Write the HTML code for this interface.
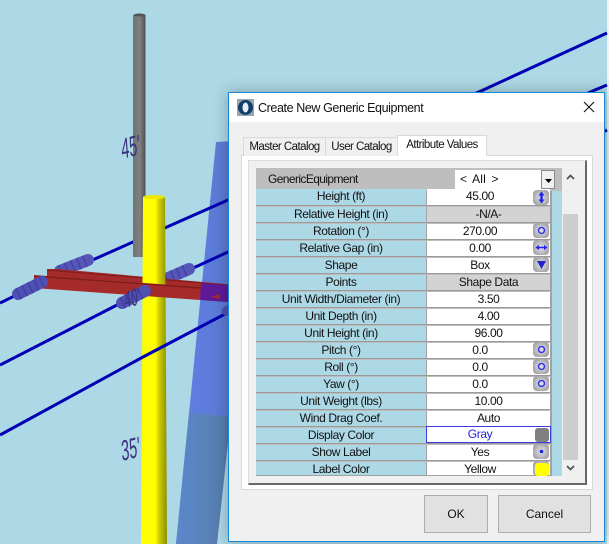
<!DOCTYPE html>
<html><head><meta charset="utf-8"><style>
html,body{margin:0;padding:0}
body{width:609px;height:544px;position:relative;overflow:hidden;background:#f0f0f0;font:12px "Liberation Sans",sans-serif;color:#111}
#scene{position:absolute;left:0;top:0}
div{position:absolute;box-sizing:border-box}
#dlg{left:228px;top:92px;width:377px;height:450px;background:#f0f0f0;border:1px solid #1a86d8;box-shadow:0 0 14px rgba(0,0,0,.28)}
#ttl{left:229px;top:93px;width:375px;height:29px;background:#fff}
.t{font-size:12px;line-height:14px;white-space:nowrap;letter-spacing:-.6px}
.tab{background:#f0f0f0;border:1px solid #d9d9d9;border-bottom:0;text-align:center;line-height:19px;font-size:11.5px;letter-spacing:-.55px;white-space:nowrap}
.l,.v{height:16px;line-height:14px;text-align:center;font-size:12px;letter-spacing:-.4px;white-space:nowrap}
.l{left:256px;width:170px;background:#add8e6}
.v{left:427px;width:123px;background:#fff}
.g{background:#d3d3d3}
.b{padding-right:17px}
.sep{left:256px;width:295px;height:2px;background:linear-gradient(#9a9a9a 50%,#bdbdbd 50%)}
.ic{left:533px;width:16px;height:15px;border-radius:4px;background:radial-gradient(circle at 50% 50%,#dcdce8 0,#c0c0c4 45%,#8f8f93 100%)}
.ic svg{display:block;margin-left:.5px}
.btn{background:#e1e1e1;border:1px solid #adadad;text-align:center;line-height:37px;font-size:12px}
</style></head><body>
<svg id="scene" width="609" height="544" viewBox="0 0 609 544">
<defs>
<linearGradient id="gp" x1="0" x2="1" y1="0" y2="0"><stop offset="0" stop-color="#727272"/><stop offset=".55" stop-color="#808080"/><stop offset="1" stop-color="#505050"/></linearGradient>
<linearGradient id="yp" x1="0" x2="1" y1="0" y2="0"><stop offset="0" stop-color="#ffff00"/><stop offset=".55" stop-color="#ffff00"/><stop offset=".72" stop-color="#c8c800"/><stop offset="1" stop-color="#8f8f00"/></linearGradient>
<linearGradient id="bt" x1="0" x2="1" y1="0" y2="0"><stop offset="0" stop-color="#5f7fe8"/><stop offset="1" stop-color="#5a78c8"/></linearGradient>
<linearGradient id="bb" x1="0" x2="1" y1="0" y2="0"><stop offset="0" stop-color="#5b88cc"/><stop offset="1" stop-color="#55779f"/></linearGradient>
</defs>
<rect width="607" height="544" fill="#add8e6"/>
<polygon points="216,142 250,140 250,544 176,544" fill="url(#bt)"/>
<polygon points="189,413 250,418 250,544 176,544" fill="url(#bb)"/>
<polygon points="217,544 228,443 250,443 250,544" fill="#add8e6"/>
<g fill="none" stroke="#0000b4" stroke-width="3">
<path d="M0 303L45 281L88 262L133 242L228 200L481 91L607 33"/>
<path d="M0 365L117 305L165 281L228 252L595 90L607 85"/>
</g>
<g fill="none">
<path d="M60 271L88 260" stroke="#5656b8" stroke-width="12" stroke-linecap="round"/>
<path d="M166 279L189 269" stroke="#5656b8" stroke-width="12" stroke-linecap="round"/>
<path d="M60 271L88 260M166 279L189 269" stroke="#4343a6" stroke-width="12" stroke-dasharray="1.5 5"/>
</g>
<polygon points="47,269 58,269 225,284 228,290 47,280" fill="#a52a2a"/>
<path d="M47 270L228 285" stroke="#7a1c1c" stroke-width="1"/>
<rect x="133" y="15" width="12.5" height="242" fill="url(#gp)"/>
<ellipse cx="139.5" cy="15" rx="6" ry="1.5" fill="#555"/>
<polygon points="143,197 165,197 167,544 141,544" fill="url(#yp)"/>
<ellipse cx="154" cy="197" rx="11" ry="2" fill="#e8e800"/>
<path d="M0 435L143 357L225 314L607 130" fill="none" stroke="#0000b4" stroke-width="3"/>
<text transform="translate(122,159) rotate(-4) skewY(-10) scale(.85,1.7)" font-size="17" fill="#3a3380" font-family="Liberation Sans">45'</text>
<text transform="translate(122,461) rotate(-4) skewY(-10) scale(.85,1.7)" font-size="17" fill="#3a3380" font-family="Liberation Sans">35'</text>
<polygon points="34,275 228,289 228,302 34,288" fill="#a52a2a"/>
<path d="M34 276L200 288L228 290" stroke="#7a1c1c" stroke-width="1.2"/>
<polygon points="201,283 228,285 228,302 200,300" fill="#5e1a96"/>
<polygon points="211,297 220,294 220,299" fill="#a52a2a"/>
<g fill="none">
<path d="M18 294L42 282M122 303L145 291" stroke="#5050b4" stroke-width="12" stroke-linecap="round"/>
<path d="M226 311L232 308" stroke="#5050b4" stroke-width="9" stroke-linecap="round"/>
<path d="M18 294L42 282M122 303L145 291" stroke="#3f3fa2" stroke-width="12" stroke-dasharray="1.5 5"/>
</g>
<text transform="translate(125,308) rotate(-4) skewY(-10) scale(.8,1.6)" font-size="15" fill="#3a3380" font-family="Liberation Sans">40'</text>
</svg>

<div id="dlg"></div>
<div id="ttl"></div>
<svg style="position:absolute;left:237px;top:99px" width="17" height="17" viewBox="0 0 17 17"><rect width="17" height="17" fill="#9aa6ae"/><circle cx="8.5" cy="8.5" r="7.5" fill="#123f6e"/><ellipse cx="8.5" cy="8.5" rx="3" ry="5" fill="#e8eef2"/></svg>
<div class="t" style="left:258px;top:101px;font-size:12.5px;line-height:15px;letter-spacing:-.4px">Create New Generic Equipment</div>
<svg style="position:absolute;left:583px;top:101px" width="12" height="12" viewBox="0 0 12 12"><path d="M1 1L11 11M11 1L1 11" stroke="#111" stroke-width="1.1"/></svg>

<div style="left:241px;top:155px;width:352px;height:335px;background:#fff;border:1px solid #d9d9d9"></div>
<div class="tab" style="left:243px;top:137px;width:83px;height:19px">Master Catalog</div>
<div class="tab" style="left:325px;top:137px;width:73px;height:19px">User Catalog</div>
<div class="tab" style="left:397px;top:135px;width:90px;height:21px;background:#fff">Attribute Values</div>
<div style="left:248px;top:160px;width:339px;height:325px;background:#f0f0f0;border:1px solid #dcdcdc;border-right:2px solid #696969;border-bottom:2px solid #696969"></div>

<div style="left:256px;top:168px;width:306px;height:308px;background:#add8e6"></div>
<div style="left:256px;top:168px;width:306px;height:23px;background:#bebebe"></div>
<div class="t" style="left:268px;top:172px">GenericEquipment</div>
<div style="left:455px;top:170px;width:100px;height:19px;background:#fff"></div>
<div class="t" style="left:460px;top:172px;letter-spacing:.2px;word-spacing:2px">&lt; All &gt;</div>
<div style="left:541px;top:170px;width:14px;height:19px;background:#f0f0f0;border:1px solid #8a8a8a"></div>
<svg style="position:absolute;left:545px;top:179px" width="7" height="4"><path d="M0 0H7L3.5 4Z" fill="#000"/></svg>

<div style="left:426px;top:191px;width:1px;height:285px;background:#a2a2a2"></div>
<div style="left:550px;top:191px;width:1.5px;height:285px;background:#a2a2a2"></div>

<div class="l" style="top:189px">Height (ft)</div><div class="v b" style="top:189px">45.00</div><div class="sep" style="top:205px"></div>
<div class="l" style="top:207px">Relative Height (in)</div><div class="v g" style="top:207px">-N/A-</div><div class="sep" style="top:222px"></div>
<div class="l" style="top:224px">Rotation (°)</div><div class="v b" style="top:224px">270.00</div><div class="sep" style="top:239px"></div>
<div class="l" style="top:241px">Relative Gap (in)</div><div class="v b" style="top:241px">0.00</div><div class="sep" style="top:256px"></div>
<div class="l" style="top:258px">Shape</div><div class="v b" style="top:258px">Box</div><div class="sep" style="top:273px"></div>
<div class="l" style="top:275px">Points</div><div class="v g" style="top:275px">Shape Data</div><div class="sep" style="top:290px"></div>
<div class="l" style="top:292px">Unit Width/Diameter (in)</div><div class="v" style="top:292px">3.50</div><div class="sep" style="top:307px"></div>
<div class="l" style="top:309px">Unit Depth (in)</div><div class="v" style="top:309px">4.00</div><div class="sep" style="top:324px"></div>
<div class="l" style="top:326px">Unit Height (in)</div><div class="v" style="top:326px">96.00</div><div class="sep" style="top:341px"></div>
<div class="l" style="top:343px">Pitch (°)</div><div class="v b" style="top:343px">0.0</div><div class="sep" style="top:358px"></div>
<div class="l" style="top:360px">Roll (°)</div><div class="v b" style="top:360px">0.0</div><div class="sep" style="top:375px"></div>
<div class="l" style="top:377px">Yaw (°)</div><div class="v b" style="top:377px">0.0</div><div class="sep" style="top:392px"></div>
<div class="l" style="top:394px">Unit Weight (lbs)</div><div class="v" style="top:394px">10.00</div><div class="sep" style="top:409px"></div>
<div class="l" style="top:411px">Wind Drag Coef.</div><div class="v" style="top:411px">Auto</div><div class="sep" style="top:426px"></div>
<div class="l" style="top:428px">Display Color</div><div class="sep" style="top:443px"></div>
<div class="v b" style="left:426px;width:125px;top:426px;height:17px;border:1.5px solid #3a3ae0;color:#2222e0;line-height:14px">Gray</div>
<div class="l" style="top:445px">Show Label</div><div class="v b" style="top:445px">Yes</div><div class="sep" style="top:460px"></div>
<div class="l" style="top:462px;height:14px">Label Color</div><div class="v b" style="top:462px;height:14px">Yellow</div>
<div style="left:256px;top:475px;width:295px;height:1px;background:#a2a2a2"></div>

<div class="ic" style="top:190px"><svg width="15" height="15"><path d="M7.5 1.5L10.5 5.5H8.7V9.5H10.5L7.5 13.5L4.5 9.5H6.3V5.5H4.5Z" fill="#2222e8"/></svg></div>
<div class="ic" style="top:223px"><svg width="15" height="15"><circle cx="7.5" cy="7.5" r="3" fill="none" stroke="#2a2ae8" stroke-width="1.3"/></svg></div>
<div class="ic" style="top:240px"><svg width="15" height="15"><path d="M1.5 7.5L5 5V6.7H10V5L13.5 7.5L10 10V8.3H5V10Z" fill="#2222e8"/></svg></div>
<div class="ic" style="top:257px"><svg width="15" height="15"><path d="M3 4H12L7.5 12Z" fill="#2222c8"/></svg></div>
<div class="ic" style="top:342px"><svg width="15" height="15"><circle cx="7.5" cy="7.5" r="3" fill="none" stroke="#2a2ae8" stroke-width="1.3"/></svg></div>
<div class="ic" style="top:359px"><svg width="15" height="15"><circle cx="7.5" cy="7.5" r="3" fill="none" stroke="#2a2ae8" stroke-width="1.3"/></svg></div>
<div class="ic" style="top:376px"><svg width="15" height="15"><circle cx="7.5" cy="7.5" r="3" fill="none" stroke="#2a2ae8" stroke-width="1.3"/></svg></div>
<div class="ic" style="top:444px"><svg width="15" height="15"><circle cx="7.5" cy="7.5" r="1.8" fill="#2222e8"/></svg></div>
<div style="left:535px;top:428px;width:14px;height:14px;border-radius:3px;background:#808080"></div>
<div class="ic" style="top:461px"></div>
<div style="left:535px;top:462.5px;width:13.5px;height:13px;border-radius:3px;background:#ffff00"></div>

<div style="left:563px;top:214px;width:15px;height:246px;background:#cdcdcd"></div>
<svg style="position:absolute;left:566px;top:174px" width="9" height="6"><path d="M1 5L4.5 1.5L8 5" fill="none" stroke="#555" stroke-width="1.8"/></svg>
<svg style="position:absolute;left:566px;top:465px" width="9" height="6"><path d="M1 1L4.5 4.5L8 1" fill="none" stroke="#555" stroke-width="1.8"/></svg>

<div class="btn" style="left:424px;top:495px;width:64px;height:38px">OK</div>
<div class="btn" style="left:498px;top:495px;width:93px;height:38px">Cancel</div>
</body></html>
